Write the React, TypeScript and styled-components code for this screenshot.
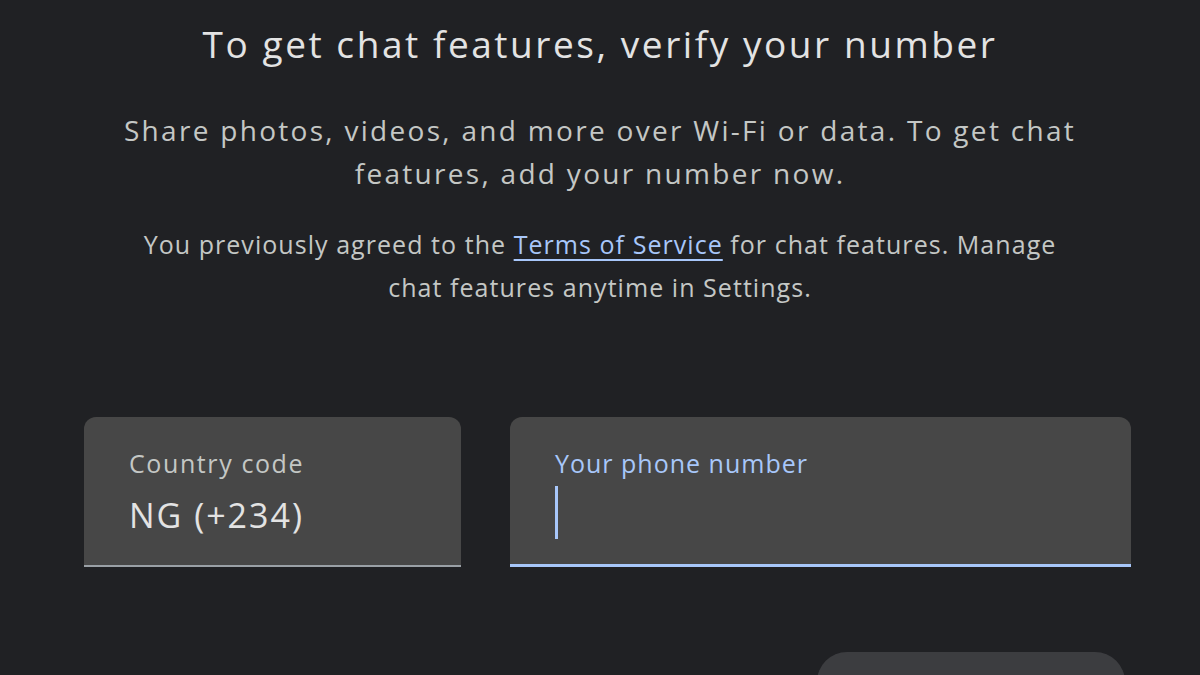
import React from "react";
import styled, { createGlobalStyle } from "styled-components";

const Global = createGlobalStyle`
  html, body { margin: 0; padding: 0; background: #202124; }
  body { font-family: "Open Sans", Roboto, "Liberation Sans", sans-serif; }
  * { box-sizing: border-box; }
`;

const Page = styled.div`
  width: 1200px;
  height: 675px;
  overflow: hidden;
  background: #202124;
  display: flex;
  flex-direction: column;
  align-items: center;
  padding-top: 20px;
`;

const Title = styled.h1`
  margin: 0;
  font-size: 37px;
  font-weight: 400;
  letter-spacing: 2.55px;
  color: #e3e3e3;
  line-height: 48px;
  text-align: center;
`;

const Subtitle = styled.p`
  margin: 41px 0 0;
  width: 980px;
  font-size: 28px;
  letter-spacing: 2.3px;
  line-height: 43px;
  color: #c4c7c5;
  text-align: center;
`;

const Terms = styled.p`
  margin: 28px 0 0;
  width: 940px;
  font-size: 25px;
  letter-spacing: 1.05px;
  line-height: 43px;
  color: #c4c7c5;
  text-align: center;
`;

const Link = styled.a`
  color: #a8c7fa;
  text-decoration: underline;
  text-underline-offset: 5px;
  text-decoration-thickness: 2px;
`;

const FieldRow = styled.div`
  margin-top: 108px;
  display: flex;
  gap: 49px;
  align-self: flex-start;
  margin-left: 84px;
`;

const Field = styled.div<{ $w: number; $active?: boolean }>`
  width: ${(p) => p.$w}px;
  height: 150px;
  background: #474747;
  border-radius: 12px 12px 0 0;
  border-bottom: ${(p) => (p.$active ? "3px solid #a8c7fa" : "2px solid #9aa0a6")};
  padding: 30px 0 0 45px;
  display: flex;
  flex-direction: column;
`;

const Label = styled.div<{ $active?: boolean }>`
  font-size: 25px;
  letter-spacing: ${(p) => (p.$active ? "1px" : "1.6px")};
  line-height: 32px;
  color: ${(p) => (p.$active ? "#a8c7fa" : "#c4c7c5")};
`;

const Value = styled.div`
  margin-top: 16px;
  font-size: 34px;
  letter-spacing: 2px;
  line-height: 40px;
  color: #e3e3e3;
`;

const Cursor = styled.div`
  margin-top: 7px;
  width: 3px;
  height: 53px;
  background: #a8c7fa;
`;

const Footer = styled.div`
  width: 1200px;
  display: flex;
  justify-content: flex-end;
  padding-right: 75px;
  margin-top: 85px;
`;

const Button = styled.div`
  width: 308px;
  height: 60px;
  border-radius: 30px;
  background: #3c3d40;
`;

export default function App() {
  return (
    <>
      <Global />
      <Page>
        <Title>To get chat features, verify your number</Title>
        <Subtitle>
          Share photos, videos, and more over Wi-Fi or data. To get chat features, add your number now.
        </Subtitle>
        <Terms>
          You previously agreed to the <Link>Terms of Service</Link> for chat features. Manage chat
          features anytime in Settings.
        </Terms>
        <FieldRow>
          <Field $w={377}>
            <Label>Country code</Label>
            <Value>NG (+234)</Value>
          </Field>
          <Field $w={621} $active>
            <Label $active>Your phone number</Label>
            <Cursor />
          </Field>
        </FieldRow>
        <Footer>
          <Button />
        </Footer>
      </Page>
    </>
  );
}
